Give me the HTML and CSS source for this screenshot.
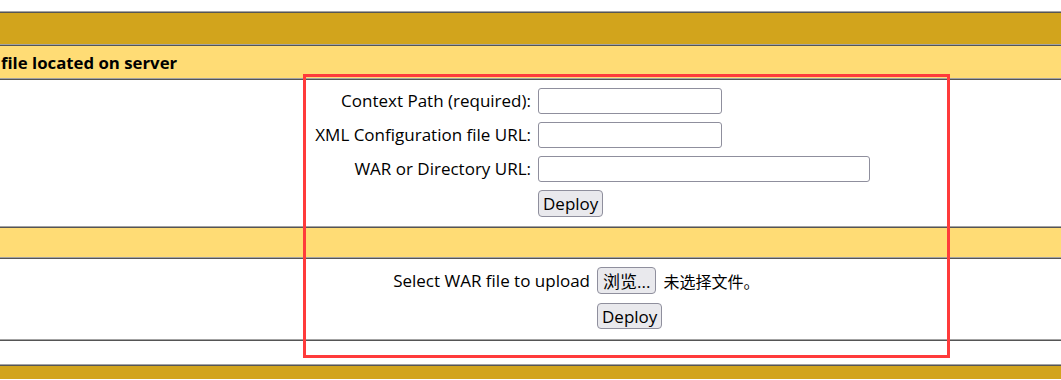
FILE: index.html
```html
<!DOCTYPE html>
<html lang="zh-CN">
<head>
  <meta charset="UTF-8" />
  <meta name="viewport" content="width=device-width, initial-scale=1.0" />
  <title>Tomcat Web Application Manager</title>
  <link rel="stylesheet" href="styles.css">
</head>
<body>
  <!-- Deploy table -->
  <div class="table">
    <div class="row title"></div>
    <div class="row header-left">file located on server</div>

    <!-- deploy from server -->
    <div class="row form-row">
      <form class="form-grid">
        <label class="lbl" for="deployPath">Context Path (required):</label>
        <input class="txt" type="text" id="deployPath" name="deployPath">
        <label class="lbl" for="deployConfig">XML Configuration file URL:</label>
        <input class="txt" type="text" id="deployConfig" name="deployConfig">
        <label class="lbl" for="deployWar">WAR or Directory URL:</label>
        <input class="txt wide" type="text" id="deployWar" name="deployWar">
        <span></span>
        <button class="btn" type="button">Deploy</button>
      </form>
    </div>

    <div class="row header-left short"></div>

    <!-- upload war -->
    <div class="row upload-row">
      <form class="upload-grid">
        <span class="lbl">Select WAR file to upload</span>
        <div class="file-pick">
          <button class="btn file-btn" type="button">浏览...</button>
          <span class="file-name">未选择文件。</span>
        </div>
        <span></span>
        <button class="btn" type="button">Deploy</button>
      </form>
    </div>

    <div class="row empty"></div>
    <div class="row title last"></div>
  </div>

  <!-- highlight -->
  <div class="highlight"></div>
</body>
</html>
```

FILE: styles.css
```css
* {
  margin: 0; padding: 0;
  box-sizing: border-box;
}
body {
  background: #fff;
  color: #000;
  font-family: 'Open Sans', 'Noto Sans CJK SC', sans-serif;
  font-size: 17px;
  padding-top: 11px;
  overflow: hidden;
  height: 380px;
}
.table {
  width: 100%;
  border-top: 1px solid #a3a3a3;
}
.row {
  border-top: 1px solid #555;
  border-bottom: 1px solid #a3a3a3;
}
.title {
  background: #D2A41C;
  height: 33px;
}
.title.last {
  height: 14px;
  border-bottom: none;
}
.header-left {
  background: #FFDC75;
  height: 34px;
  font-weight: bold;
  font-size: 16.8px;
  line-height: 32px;
  padding-left: 1px;
  padding-top: 1px;
}
.header-left.short {
  height: 31px;
}
.form-row {
  height: 148px;
  padding-top: 8px;
}
.form-grid {
  display: grid;
  grid-template-columns: 531px auto;
  column-gap: 7px;
  row-gap: 8px;
  align-items: center;
}
.lbl {
  text-align: right;
  line-height: 26px;
}
.txt {
  width: 184px;
  height: 26px;
  border: 1px solid #8f8f9d;
  border-radius: 3px;
  background: #fff;
}
.txt.wide {
  width: 332px;
}
.btn {
  justify-self: start;
  font-family: 'Open Sans', 'Noto Sans CJK SC', sans-serif;
  font-size: 17px;
  color: #000;
  background: #e9e9ed;
  border: 1px solid #8f8f9d;
  border-radius: 4px;
  height: 27px;
  padding: 0 4px;
}
.upload-row {
  height: 82px;
  padding-top: 8px;
}
.upload-grid {
  display: grid;
  grid-template-columns: 590px auto;
  column-gap: 7px;
  row-gap: 9px;
  align-items: center;
}
.file-pick {
  display: flex;
  align-items: center;
  gap: 7px;
}
.file-btn {
  padding: 0 5px;
}
.file-name {
  font-family: 'Noto Sans CJK SC', sans-serif;
  font-size: 16px;
}
.upload-grid .btn:last-child {
  height: 26px;
}
.empty {
  height: 25px;
}
.highlight {
  position: absolute;
  left: 303px;
  top: 74px;
  width: 647px;
  height: 284px;
  border: 3px solid #ff3b3b;
  pointer-events: none;
}
```
